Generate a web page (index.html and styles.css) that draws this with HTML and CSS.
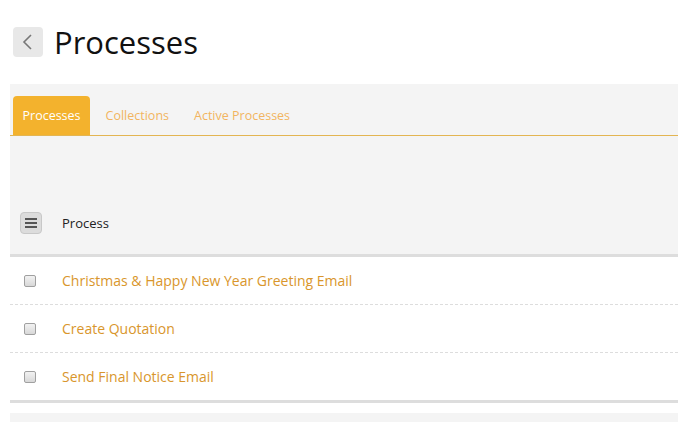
FILE: index.html
```html
<!DOCTYPE html>
<html>
<head>
<meta charset="utf-8">
<link rel="stylesheet" href="styles.css">
</head>
<body>
<div class="page">
  <div class="title-bar">
    <span class="back-btn">
      <svg width="30" height="30" viewBox="0 0 30 30"><path d="M18 8 L11 15 L18 22" fill="none" stroke="#777" stroke-width="1.6"/></svg>
    </span>
    <h1 class="title">Processes</h1>
  </div>
  <div class="panel">
    <div class="tabs">
      <span class="tab active">Processes</span>
      <span class="tab">Collections</span>
      <span class="tab">Active Processes</span>
    </div>
    <div class="spacer"></div>
    <div class="thead">
      <span class="menu-btn"><i></i><i></i><i></i></span>
      <span class="th-label">Process</span>
    </div>
  </div>
  <div class="rows">
    <div class="row"><span class="cb"></span><span class="name">Christmas &amp; Happy New Year Greeting Email</span></div>
    <div class="row"><span class="cb"></span><span class="name">Create Quotation</span></div>
    <div class="row"><span class="cb"></span><span class="name">Send Final Notice Email</span></div>
  </div>
  <div class="footer"></div>
</div>
</body>
</html>
```
FILE: styles.css
```css
html, body { margin: 0; padding: 0; background: #fff; }
body { font-family: "Open Sans", "DejaVu Sans", sans-serif; overflow: hidden; }
.page { padding-left: 10px; }
.title-bar { display: flex; align-items: center; height: 84px; padding-left: 3px; box-sizing: border-box; }
.back-btn { width: 30px; height: 30px; background: #e8e8e8; border-radius: 4px; display: block; margin-right: 11px; }
.back-btn svg { display: block; }
.title { margin: 0; font-size: 31px; font-weight: 400; color: #111; line-height: 30px; }
.panel { background: #f4f4f4; padding-top: 12px; }
.tabs { display: flex; padding-left: 3px; border-bottom: 1px solid #e3b552; height: 39px; }
.tab { font-size: 12.5px; color: #f2b45f; padding: 0 9.5px; margin-right: 6px; line-height: 39px; }
.tab.active { background: #f3b22d; color: #fff; border-radius: 4px 4px 0 0; }
.spacer { height: 63px; }
.thead { display: flex; align-items: center; height: 48px; padding-bottom: 7px; border-bottom: 3px solid #ddd; }
.menu-btn { width: 20px; height: 20px; margin-left: 10px; background: #dcdcdc; border: 1px solid #c8c8c8; border-radius: 4px; display: flex; flex-direction: column; justify-content: center; align-items: center; gap: 2px; }
.menu-btn i { display: block; width: 12px; height: 2px; background: #555; }
.th-label { margin-left: 20px; font-size: 13px; color: #222; }
.row { display: flex; align-items: center; height: 47px; border-bottom: 1px dashed #ddd; }
.row:last-child { border-bottom: 3px solid #ddd; }
.cb { width: 10px; height: 10px; margin-left: 14px; border: 1px solid #a0a0a0; border-radius: 2px; background: linear-gradient(#f2f2f2, #d8d8d8); }
.name { margin-left: 26px; font-size: 14px; color: #d9962c; }
.footer { margin-top: 10px; height: 20px; background: #f4f4f4; }
```
